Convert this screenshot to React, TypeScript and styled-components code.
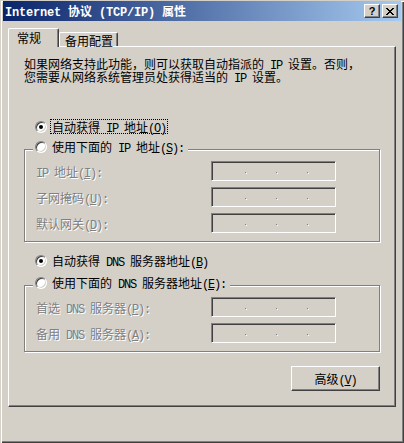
import React from "react";
import styled, { createGlobalStyle, css } from "styled-components";

const FACE = "#d4d0c8";
const SHADOW = "#808080";
const DARK = "#404040";

const GlobalStyle = createGlobalStyle`
  html, body {
    margin: 0;
    padding: 0;
    background: ${FACE};
  }
  body {
    font-family: "Noto Sans CJK SC", "Liberation Sans", sans-serif;
    font-size: 12px;
    color: #000;
  }
`;

const Window = styled.div`
  box-sizing: border-box;
  width: 404px;
  height: 443px;
  padding: 1px 3px 0;
  background: ${FACE};
  box-shadow: inset 1px 1px ${FACE}, inset 2px 2px #fff,
    inset -1px -1px ${DARK}, inset -2px -2px ${SHADOW};
  display: flex;
  flex-direction: column;
  & > * {
    flex-shrink: 0;
  }
`;

const TitleBar = styled.div`
  height: 20px;
  display: flex;
  align-items: center;
  padding: 0 3px 0 2px;
  background: linear-gradient(to right, #0a246a, #a6caf0);
`;

const Caption = styled.div`
  flex: 1;
  color: #fff;
  font-family: "Noto Sans CJK SC", sans-serif;
  font-weight: bold;
  font-size: 12px;
  line-height: 14px;
  white-space: nowrap;
`;

const CaptionLatin = styled.span`
  font-family: "Liberation Mono", "DejaVu Sans Mono", monospace;
  font-weight: bold;
  font-size: 12px;
  letter-spacing: -0.2px;
  line-height: 10px;
`;

const CaptionButton = styled.div<{ $gap?: boolean }>`
  box-sizing: border-box;
  width: 16px;
  height: 14px;
  margin-right: ${(p) => (p.$gap ? 2 : 0)}px;
  background: ${FACE};
  border: 1px solid;
  border-color: #fff ${DARK} ${DARK} #fff;
  box-shadow: inset -1px -1px ${SHADOW};
  display: flex;
  align-items: center;
  justify-content: center;
  font: bold 11px "Liberation Sans", sans-serif;
  line-height: 1;
  color: #000;
`;

const TabStrip = styled.div`
  display: flex;
  align-items: flex-end;
  height: 19px;
  margin: 7px 0 -1px 5px;
  position: relative;
  z-index: 1;
`;

const Tab = styled.div<{ $active?: boolean }>`
  box-sizing: border-box;
  background: ${FACE};
  border-top: 1px solid #fff;
  border-left: 1px solid #fff;
  border-right: 1px solid ${DARK};
  box-shadow: inset -1px 0 ${SHADOW};
  border-radius: 2px 2px 0 0;
  white-space: nowrap;
  line-height: 13px;
  ${(p) =>
    p.$active
      ? css`
          height: 19px;
          width: 51px;
          padding: 2px 0 0 8px;
        `
      : css`
          height: 14px;
          width: 59px;
          margin-bottom: 1px;
          padding: 1px 0 0 5px;
        `}
`;

const Panel = styled.div`
  box-sizing: border-box;
  width: 388px;
  height: 361px;
  margin-left: 5px;
  border: 1px solid;
  border-color: #fff ${DARK} ${DARK} #fff;
  box-shadow: inset -1px -1px ${SHADOW};
  padding: 10px 15px 0;
  display: flex;
  flex-direction: column;
`;

const Desc = styled.p`
  margin: 0;
  line-height: 13px;
  white-space: nowrap;
`;

const OptionRow = styled.div<{ $mt: number }>`
  display: flex;
  align-items: center;
  height: 15px;
  padding-left: 11px;
  margin-top: ${(p) => p.$mt}px;
`;

const ChoiceBox = styled.div`
  display: flex;
  align-items: center;
  height: 15px;
`;

const Radio = styled.span<{ $checked?: boolean }>`
  box-sizing: border-box;
  position: relative;
  width: 12px;
  height: 12px;
  border-radius: 50%;
  background: #fff;
  border: 1px solid;
  border-color: ${SHADOW} #fff #fff ${SHADOW};
  box-shadow: inset 1px 1px ${DARK}, inset -1px -1px ${FACE};
  ${(p) =>
    p.$checked &&
    css`
      &::after {
        content: "";
        position: absolute;
        left: 3px;
        top: 3px;
        width: 4px;
        height: 4px;
        border-radius: 50%;
        background: #000;
      }
    `}
`;

const OptionLabel = styled.span<{ $focus?: boolean }>`
  box-sizing: border-box;
  height: 15px;
  line-height: 13px;
  margin-left: 3px;
  padding: 0 1px;
  border: 1px ${(p) => (p.$focus ? "dotted #000" : "solid transparent")};
  white-space: nowrap;
`;

const Group = styled.fieldset<{ $mt: number }>`
  margin: ${(p) => p.$mt}px 0 0;
  padding: 0 0 8px 8px;
  min-inline-size: 0;
  border: 1px solid ${SHADOW};
  box-shadow: inset 1px 1px #fff, 1px 1px #fff;
`;

const Legend = styled.legend`
  padding: 0 2px 6px;
  background: ${FACE};
`;

const Fields = styled.div`
  display: flex;
  flex-direction: column;
  gap: 6px;
  padding: 1px 0 0 3px;
`;

const FieldRow = styled.div`
  display: grid;
  grid-template-columns: 175px 125px;
  align-items: center;
  height: 20px;
`;

const FieldLabel = styled.span`
  color: ${SHADOW};
  text-shadow: 1px 1px #fff;
  line-height: 13px;
  white-space: nowrap;
`;

const IpBox = styled.div`
  box-sizing: border-box;
  width: 125px;
  height: 20px;
  border: 1px solid;
  border-color: ${SHADOW} #fff #fff ${SHADOW};
  box-shadow: inset 1px 1px ${DARK}, inset -1px -1px ${FACE};
  padding: 10px 0 0 3px;
  display: flex;
  align-items: flex-start;
`;

const Dot = styled.span`
  width: 1px;
  height: 1px;
  margin-left: 30px;
  background: ${SHADOW};
  box-shadow: 1px 1px #fff;
`;

const PushButton = styled.button`
  align-self: flex-end;
  box-sizing: border-box;
  width: 89px;
  height: 25px;
  margin-top: 14px;
  padding: 0;
  background: ${FACE};
  border: 1px solid;
  border-color: #fff ${DARK} ${DARK} #fff;
  box-shadow: inset -1px -1px ${SHADOW};
  font-family: "Noto Sans CJK SC", sans-serif;
  font-size: 12px;
  line-height: 13px;
  color: #000;
`;

const Latin = styled.span`
  font-family: "Liberation Mono", monospace;
  font-size: 12px;
  letter-spacing: -1.2px;
  line-height: 8px;
`;

// splits a label into CJK runs and ascii runs; "&X" marks the access key
function T({ children }: { children: string }) {
  const parts = children.split(/([\x20-\x7e]+)/);
  return (
    <>
      {parts.map((part, i) => {
        if (i % 2 === 0) return part;
        const bits = part.split(/&(.)/);
        return (
          <Latin key={i}>
            {bits.map((b, j) => (j % 2 ? <u key={j}>{b}</u> : b))}
          </Latin>
        );
      })}
    </>
  );
}

function Choice({ label, checked, focus }: { label: string; checked?: boolean; focus?: boolean }) {
  return (
    <ChoiceBox>
      <Radio $checked={checked} />
      <OptionLabel $focus={focus}>
        <T>{label}</T>
      </OptionLabel>
    </ChoiceBox>
  );
}

function IpInput() {
  return (
    <IpBox>
      <Dot />
      <Dot />
      <Dot />
    </IpBox>
  );
}

function CloseGlyph() {
  return (
    <svg width="8" height="7" viewBox="0 0 8 7" shapeRendering="crispEdges">
      <path
        fill="#000"
        d="M0 0h2v1H0z M6 0h2v1H6z M1 1h2v1H1z M5 1h2v1H5z M2 2h4v1H2z M3 3h2v1H3z M2 4h4v1H2z M1 5h2v1H1z M5 5h2v1H5z M0 6h2v1H0z M6 6h2v1H6z"
      />
    </svg>
  );
}

const ipFields = ["IP 地址(&I):", "子网掩码(&U):", "默认网关(&D):"];
const dnsFields = ["首选 DNS 服务器(&P):", "备用 DNS 服务器(&A):"];

function FieldList({ labels }: { labels: string[] }) {
  return (
    <Fields>
      {labels.map((l) => (
        <FieldRow key={l}>
          <FieldLabel>
            <T>{l}</T>
          </FieldLabel>
          <IpInput />
        </FieldRow>
      ))}
    </Fields>
  );
}

export default function App() {
  return (
    <>
      <GlobalStyle />
      <Window>
        <TitleBar>
          <Caption>
            <CaptionLatin>Internet </CaptionLatin>协议
            <CaptionLatin> (TCP/IP) </CaptionLatin>属性
          </Caption>
          <CaptionButton $gap>?</CaptionButton>
          <CaptionButton>
            <CloseGlyph />
          </CaptionButton>
        </TitleBar>

        <TabStrip>
          <Tab $active>常规</Tab>
          <Tab>备用配置</Tab>
        </TabStrip>

        <Panel>
          <Desc>
            <T>如果网络支持此功能，则可以获取自动指派的 IP 设置。否则，</T>
            <br />
            <T>您需要从网络系统管理员处获得适当的 IP 设置。</T>
          </Desc>

          <OptionRow $mt={36}>
            <Choice label="自动获得 IP 地址(&O)" checked focus />
          </OptionRow>
          <Group $mt={5}>
            <Legend>
              <Choice label="使用下面的 IP 地址(&S):" />
            </Legend>
            <FieldList labels={ipFields} />
          </Group>

          <OptionRow $mt={11}>
            <Choice label="自动获得 DNS 服务器地址(&B)" checked />
          </OptionRow>
          <Group $mt={7}>
            <Legend>
              <Choice label="使用下面的 DNS 服务器地址(&E):" />
            </Legend>
            <FieldList labels={dnsFields} />
          </Group>

          <PushButton>
            <T>高级(&V)</T>
          </PushButton>
        </Panel>
      </Window>
    </>
  );
}
